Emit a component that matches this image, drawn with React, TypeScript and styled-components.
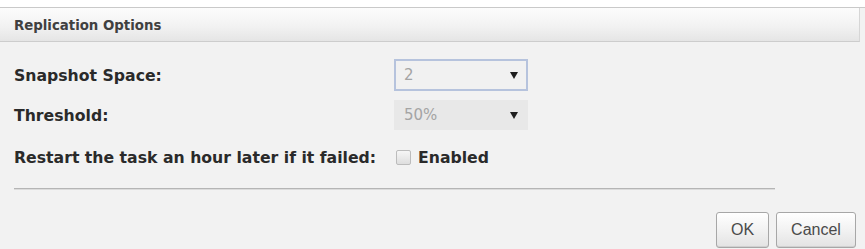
import React from "react";
import styled, { createGlobalStyle } from "styled-components";

const Global = createGlobalStyle`
  html, body { margin: 0; padding: 0; background: #f2f2f2; }
  body { font-family: "DejaVu Sans", Verdana, sans-serif; }
`;

const Page = styled.div`
  width: 865px;
  height: 249px;
  background: #f2f2f2;
  display: flex;
  flex-direction: column;
  overflow: hidden;
`;

const TopStrip = styled.div`
  height: 7px;
  background: #ffffff;
  border-bottom: 1px solid #c9c9c9;
`;

const Header = styled.div`
  height: 33px;
  margin-right: 5px;
  display: flex;
  align-items: center;
  padding-left: 14px;
  background: linear-gradient(to bottom, #fcfcfc 0%, #f2f2f2 55%, #e5e5e5 100%);
  border-bottom: 1px solid #cdcdcd;
  border-right: 1px solid #d6d6d6;
  font-family: "DejaVu Sans Condensed", "DejaVu Sans", sans-serif;
  font-weight: bold;
  font-size: 14.8px;
  color: #404040;
`;

const Form = styled.div`
  display: grid;
  grid-template-columns: 380px 1fr;
  grid-template-rows: 32px 30px 36px;
  row-gap: 9px;
  padding: 17px 0 0 14px;
  align-items: center;
`;

const Label = styled.div`
  font-family: "DejaVu Sans", sans-serif;
  font-weight: bold;
  font-size: 15.7px;
  color: #2a2a2a;
  white-space: nowrap;
`;

const SelectBox = styled.div<{ $focused?: boolean }>`
  width: 134px;
  height: 100%;
  box-sizing: border-box;
  display: flex;
  align-items: center;
  justify-content: space-between;
  padding: 0 8px 0 8px;
  background: ${(p) => (p.$focused ? "#f1f1f1" : "#e8e8e8")};
  border: 2px solid ${(p) => (p.$focused ? "#b6c3dd" : "transparent")};
  font-family: "DejaVu Sans", sans-serif;
  font-size: 15px;
  color: #a4a4a4;
`;

const Arrow = styled.span`
  width: 0;
  height: 0;
  border-left: 4px solid transparent;
  border-right: 4px solid transparent;
  border-top: 7px solid #1e1e1e;
`;

const CheckRow = styled.div`
  display: flex;
  align-items: center;
  gap: 7px;
  margin-left: 2px;
`;

const Checkbox = styled.span`
  width: 15px;
  height: 15px;
  box-sizing: border-box;
  border: 1px solid #bcbcbc;
  border-radius: 2px;
  background: linear-gradient(to bottom, #f6f6f6, #dedede);
`;

const Separator = styled.div`
  margin: 13px 0 0 14px;
  width: 761px;
  height: 1px;
  background: #b5b5b5;
  border-bottom: 1px solid #dcdcdc;
`;

const Footer = styled.div`
  display: flex;
  justify-content: flex-end;
  gap: 7px;
  padding: 22px 9px 0 0;
`;

const Button = styled.button<{ $w: number }>`
  width: ${(p) => p.$w}px;
  height: 36px;
  box-sizing: border-box;
  border: 1px solid #a7a7a7;
  border-radius: 3px;
  background: linear-gradient(to bottom, #ffffff 0%, #f2f2f2 50%, #e3e3e3 100%);
  box-shadow: inset 0 -1px 0 #d0d0d0;
  font-family: "Liberation Sans", Arial, sans-serif;
  font-size: 16px;
  color: #4a4a4a;
  padding: 0;
`;

export default function App() {
  return (
    <Page>
      <Global />
      <TopStrip />
      <Header>Replication Options</Header>
      <Form>
        <Label>Snapshot Space:</Label>
        <SelectBox $focused>
          <span>2</span>
          <Arrow />
        </SelectBox>
        <Label>Threshold:</Label>
        <SelectBox>
          <span>50%</span>
          <Arrow />
        </SelectBox>
        <Label>Restart the task an hour later if it failed:</Label>
        <CheckRow>
          <Checkbox />
          <Label>Enabled</Label>
        </CheckRow>
      </Form>
      <Separator />
      <Footer>
        <Button $w={53}>OK</Button>
        <Button $w={80}>Cancel</Button>
      </Footer>
    </Page>
  );
}
